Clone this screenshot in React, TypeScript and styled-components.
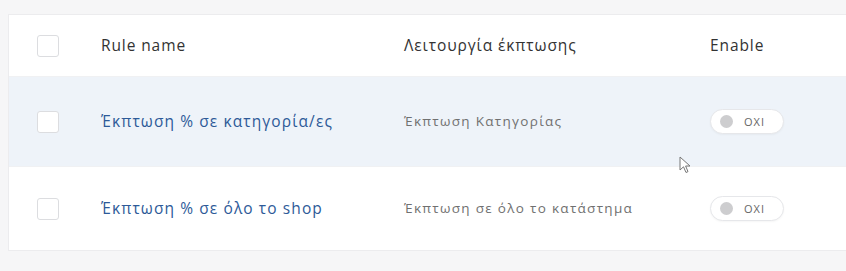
import React from 'react';
import styled, { createGlobalStyle } from 'styled-components';

const GlobalStyle = createGlobalStyle`
  html, body {
    margin: 0;
    padding: 0;
    background: #f6f6f7;
    font-family: 'Open Sans', 'DejaVu Sans', sans-serif;
  }
`;

const Page = styled.div`
  position: relative;
  width: 846px;
  height: 271px;
  padding: 14px 0 0 8px;
  box-sizing: border-box;
  overflow: hidden;
`;

const Card = styled.div`
  width: 840px;
  background: #fff;
  border: 1px solid #ececee;
  border-right: none;
`;

const Row = styled.div<{ height: number; highlighted?: boolean }>`
  display: grid;
  grid-template-columns: 92px 303px 306px 1fr;
  align-items: center;
  height: ${(p) => p.height}px;
  background: ${(p) => (p.highlighted ? '#eef3f9' : '#fff')};
  border-bottom: 1px solid #f0f1f3;

  &:last-child {
    border-bottom: none;
  }
`;

const CheckCell = styled.div`
  padding-left: 28px;
`;

const Checkbox = styled.span`
  display: block;
  width: 22px;
  height: 22px;
  box-sizing: border-box;
  border: 1px solid #dcdde0;
  border-radius: 3px;
  background: #fff;
`;

const HeadText = styled.div`
  font-size: 15.5px;
  line-height: 20px;
  color: #333;
  letter-spacing: 0.9px;
  margin-top: -2px;
`;

const NameLink = styled.a`
  display: block;
  font-size: 15.5px;
  line-height: 20px;
  color: #2d5a98;
  text-decoration: none;
  letter-spacing: 1.1px;
  margin-top: -2px;
`;

const TypeText = styled.div`
  font-size: 13.5px;
  line-height: 18px;
  color: #707070;
  letter-spacing: 1.3px;
  margin-top: -2px;
`;

const Toggle = styled.div`
  display: inline-flex;
  align-items: center;
  gap: 11px;
  width: 74px;
  height: 25px;
  box-sizing: border-box;
  padding-left: 9px;
  border: 1px solid #e6e7ea;
  border-radius: 13px;
  background: #fff;
  box-shadow: 0 1px 2px rgba(0, 0, 0, 0.04);
`;

const Knob = styled.span`
  width: 13px;
  height: 13px;
  border-radius: 50%;
  background: #cdcdcf;
`;

const ToggleLabel = styled.span`
  font-size: 11px;
  color: #666;
  letter-spacing: 1px;
`;

const Cursor = styled.svg`
  position: absolute;
  left: 679px;
  top: 156px;
`;

const rules = [
  { name: 'Έκπτωση % σε κατηγορία/ες', type: 'Έκπτωση Κατηγορίας', height: 89 },
  { name: 'Έκπτωση % σε όλο το shop', type: 'Έκπτωση σε όλο το κατάστημα', height: 83 },
];

const App = () => (
  <Page>
    <GlobalStyle />
    <Card>
      <Row height={61}>
        <CheckCell>
          <Checkbox />
        </CheckCell>
        <HeadText>Rule name</HeadText>
        <HeadText>Λειτουργία έκπτωσης</HeadText>
        <HeadText>Enable</HeadText>
      </Row>
      {rules.map((r, i) => (
        <Row key={r.name} height={r.height} highlighted={i === 0}>
          <CheckCell>
            <Checkbox />
          </CheckCell>
          <div>
            <NameLink href="#">{r.name}</NameLink>
          </div>
          <TypeText>{r.type}</TypeText>
          <div>
            <Toggle>
              <Knob />
              <ToggleLabel>OXI</ToggleLabel>
            </Toggle>
          </div>
        </Row>
      ))}
    </Card>
    <Cursor width="12" height="18" viewBox="0 0 12 18">
      <path d="M1 1 L1 14 L4.5 10.8 L7 16.5 L9 15.6 L6.6 10 L11 10 Z" fill="#fff" stroke="#777" strokeWidth="1" strokeLinejoin="round" />
    </Cursor>
  </Page>
);

export default App;
